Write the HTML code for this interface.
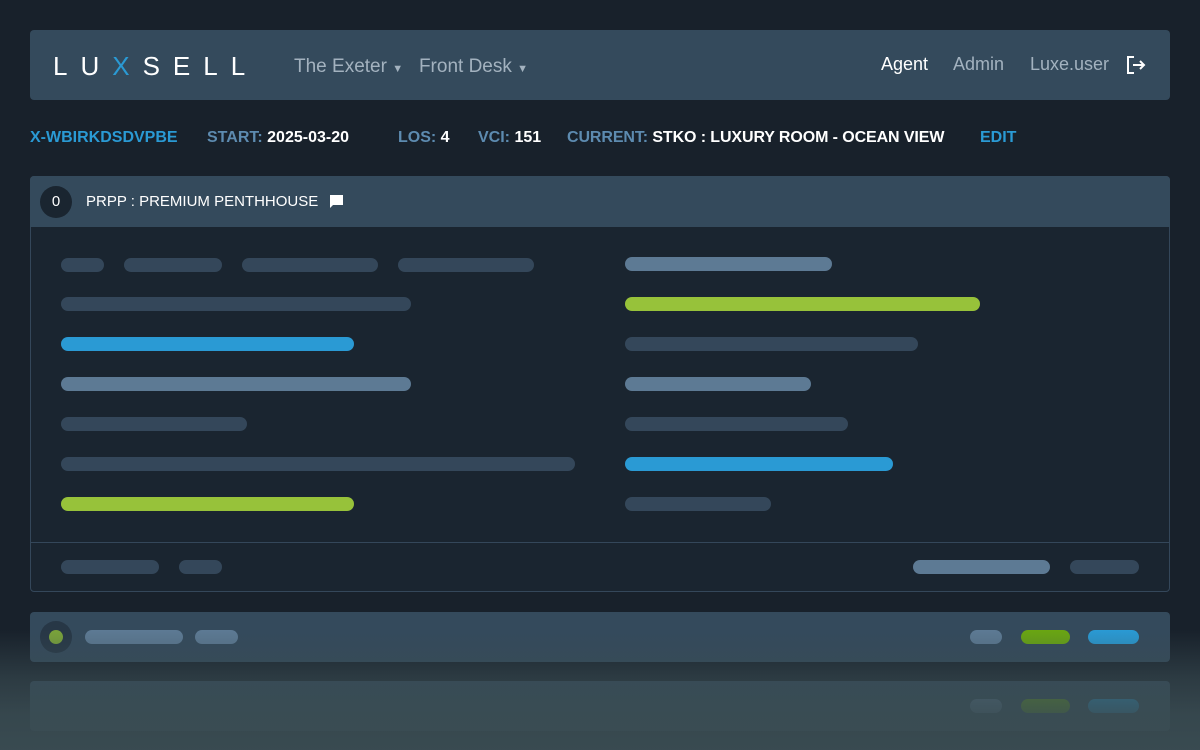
<!DOCTYPE html><html><head><style>
body{margin:0;width:1200px;height:750px;background:#18212b;font-family:"Liberation Sans",sans-serif;position:relative;overflow:hidden}
.a{position:absolute}
.bar{position:absolute;height:14px;border-radius:7px}
.d{background:#34475a}.l{background:#5d7a94}.b{background:#2a9ad4}.g{background:#97c23a}
.i{position:absolute;top:129px;font-size:16px;font-weight:bold;color:#5d8bb0;white-space:nowrap}
.i b{color:#fff}
</style></head><body>
<div class="a" style="left:30px;top:30px;width:1140px;height:70px;background:#344a5c;border-radius:4px"></div>
<div class="a" style="left:53px;top:51px;color:#fff;font-size:26px;letter-spacing:13px;font-weight:400">LU<span style="color:#2a9ad4">X</span>SELL</div>
<div class="a" style="left:294px;top:56px;color:#a3b2bf;font-size:19px">The Exeter <span style="font-size:11px">▼</span>&nbsp;&nbsp; Front Desk <span style="font-size:11px">▼</span></div>
<div class="a" style="left:881px;top:54px;color:#fff;font-size:18px">Agent</div>
<div class="a" style="left:953px;top:54px;color:#a3b2bf;font-size:18px">Admin</div>
<div class="a" style="left:1030px;top:54px;color:#a3b2bf;font-size:18px">Luxe.user</div>
<svg class="a" style="left:1126px;top:55px" width="20" height="20" viewBox="0 0 20 20" fill="none" stroke="#fff" stroke-width="2"><path d="M8 2H2v16h6M7 10h11M14 6l4 4-4 4"/></svg>
<div class="i" style="left:30px;color:#2a9ad4">X-WBIRKDSDVPBE</div>
<div class="i" style="left:207px">START: <b>2025-03-20</b></div>
<div class="i" style="left:398px">LOS: <b>4</b></div>
<div class="i" style="left:478px">VCI: <b>151</b></div>
<div class="i" style="left:567px;letter-spacing:-0.1px">CURRENT: <b>STKO : LUXURY ROOM - OCEAN VIEW</b></div>
<div class="i" style="left:980px;color:#2a9ad4">EDIT</div>
<div class="a" style="left:30px;top:176px;width:1138px;height:414px;background:#1a2530;border:1px solid #34475a;border-radius:4px"></div>
<div class="a" style="left:30px;top:176px;width:1140px;height:51px;background:#344a5c;border-radius:4px 4px 0 0"></div>
<div class="a" style="left:40px;top:186px;width:32px;height:32px;border-radius:50%;background:#1a2530;color:#fff;font-size:15px;text-align:center;line-height:32px">0</div>
<div class="a" style="left:86px;top:193px;color:#fff;font-size:15px">PRPP : PREMIUM PENTHHOUSE</div>
<svg class="a" style="left:329px;top:194px" width="15" height="15" viewBox="0 0 15 15"><path d="M1 1h13v10H4l-3 3z" fill="#fff"/></svg>
<div class="a" style="left:31px;top:542px;width:1138px;height:1px;background:#34475a"></div>
<div class="bar d" style="left:61px;top:258px;width:43px"></div>
<div class="bar d" style="left:124px;top:258px;width:98px"></div>
<div class="bar d" style="left:242px;top:258px;width:136px"></div>
<div class="bar d" style="left:398px;top:258px;width:136px"></div>
<div class="bar d" style="left:61px;top:297px;width:350px"></div>
<div class="bar b" style="left:61px;top:337px;width:293px"></div>
<div class="bar l" style="left:61px;top:377px;width:350px"></div>
<div class="bar d" style="left:61px;top:417px;width:186px"></div>
<div class="bar d" style="left:61px;top:457px;width:514px"></div>
<div class="bar g" style="left:61px;top:497px;width:293px"></div>
<div class="bar l" style="left:625px;top:257px;width:207px"></div>
<div class="bar g" style="left:625px;top:297px;width:355px"></div>
<div class="bar d" style="left:625px;top:337px;width:293px"></div>
<div class="bar l" style="left:625px;top:377px;width:186px"></div>
<div class="bar d" style="left:625px;top:417px;width:223px"></div>
<div class="bar b" style="left:625px;top:457px;width:268px"></div>
<div class="bar d" style="left:625px;top:497px;width:146px"></div>
<div class="bar d" style="left:61px;top:560px;width:98px"></div>
<div class="bar d" style="left:179px;top:560px;width:43px"></div>
<div class="bar l" style="left:913px;top:560px;width:137px"></div>
<div class="bar d" style="left:1070px;top:560px;width:69px"></div>
<div class="a" style="left:30px;top:612px;width:1140px;height:50px;background:#344a5c;border-radius:4px"></div>
<div class="a" style="left:40px;top:621px;width:32px;height:32px;border-radius:50%;background:#273746"></div>
<div class="a" style="left:49px;top:630px;width:14px;height:14px;border-radius:50%;background:#7aa33a"></div>
<div class="bar l" style="left:85px;top:630px;width:98px"></div>
<div class="bar l" style="left:195px;top:630px;width:43px"></div>
<div class="bar l" style="left:970px;top:630px;width:32px"></div>
<div class="bar" style="left:1021px;top:630px;width:49px;background:#6aa612"></div>
<div class="bar b" style="left:1088px;top:630px;width:51px"></div>
<div class="a" style="left:30px;top:681px;width:1140px;height:50px;background:#344a5c;border-radius:4px"></div>
<div class="bar l" style="left:970px;top:699px;width:32px"></div>
<div class="bar" style="left:1021px;top:699px;width:49px;background:#6aa612"></div>
<div class="bar b" style="left:1088px;top:699px;width:51px"></div>
<div class="a" style="left:0;top:630px;width:1200px;height:120px;background:linear-gradient(to bottom,rgba(58,76,82,0) 0%,rgba(58,76,82,0.6) 40%,rgba(58,76,82,0.88) 70%,rgba(58,76,82,0.97) 100%)"></div>
</body></html>
